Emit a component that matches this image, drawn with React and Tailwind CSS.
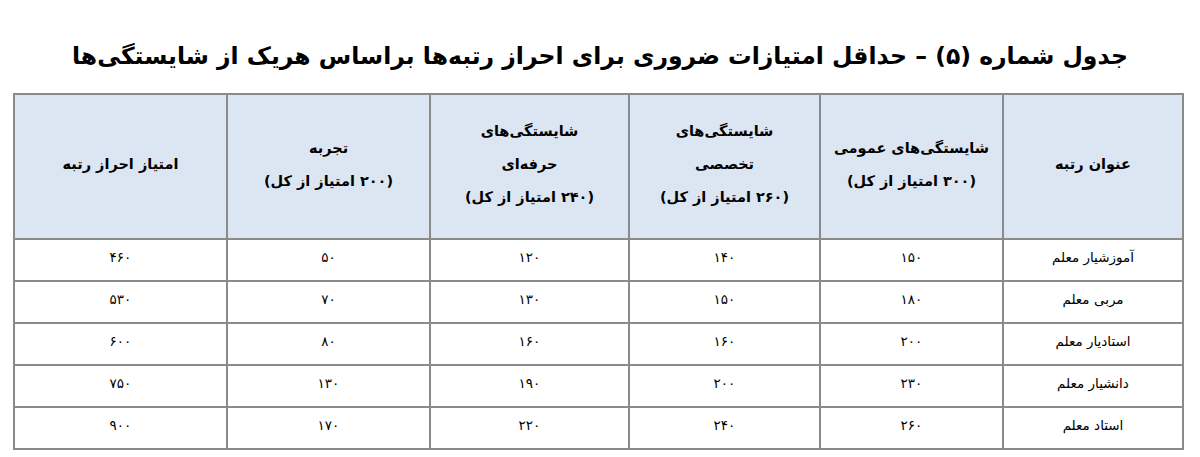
import React from "react";

const headers = [
  ["عنوان رتبه"],
  ["شایستگی‌های عمومی", "(۳۰۰ امتیاز از کل)"],
  ["شایستگی‌های", "تخصصی", "(۲۶۰ امتیاز از کل)"],
  ["شایستگی‌های", "حرفه‌ای", "(۲۴۰ امتیاز از کل)"],
  ["تجربه", "(۲۰۰ امتیاز از کل)"],
  ["امتیاز احراز رتبه"],
];

const widths = ["w-[180px]", "w-[183px]", "w-[191px]", "w-[199px]", "w-[203px]", "w-[213px]"];

const rows = [
  ["آموزشیار معلم", "۱۵۰", "۱۴۰", "۱۲۰", "۵۰", "۴۶۰"],
  ["مربی معلم", "۱۸۰", "۱۵۰", "۱۳۰", "۷۰", "۵۳۰"],
  ["استادیار معلم", "۲۰۰", "۱۶۰", "۱۶۰", "۸۰", "۶۰۰"],
  ["دانشیار معلم", "۲۳۰", "۲۰۰", "۱۹۰", "۱۳۰", "۷۵۰"],
  ["استاد معلم", "۲۶۰", "۲۴۰", "۲۲۰", "۱۷۰", "۹۰۰"],
];

export default function App() {
  return (
    <div
      dir="rtl"
      className="w-[1200px] h-[457px] bg-white overflow-hidden"
      style={{ fontFamily: '"DejaVu Sans", "Noto Sans", sans-serif' }}
    >
      <h1 className="h-[93px] pt-[38px] text-center text-[23.5px] leading-[36px] font-bold text-black">
        جدول شماره (۵) – حداقل امتیازات ضروری برای احراز رتبه‌ها براساس هریک از شایستگی‌ها
      </h1>
      <div className="px-[14px] pr-[16px]">
        <table className="w-[1170px] border-collapse table-fixed">
          <thead>
            <tr className="h-[145px] bg-[#dce6f2]">
              {headers.map((lines, i) => (
                <th
                  key={i}
                  className={`${widths[i]} border-2 border-[#8a8a8a] text-center align-middle text-[14.5px] leading-[33px] font-bold text-black pb-[4px]`}
                >
                  {lines.map((l, j) => (
                    <div key={j}>{l}</div>
                  ))}
                </th>
              ))}
            </tr>
          </thead>
          <tbody>
            {rows.map((r, i) => (
              <tr key={i} className="h-[42px]">
                {r.map((c, j) => (
                  <td
                    key={j}
                    className="border-2 border-[#8a8a8a] text-center align-middle text-[13.5px] text-black pb-[6px]"
                  >
                    {c}
                  </td>
                ))}
              </tr>
            ))}
          </tbody>
        </table>
      </div>
    </div>
  );
}
